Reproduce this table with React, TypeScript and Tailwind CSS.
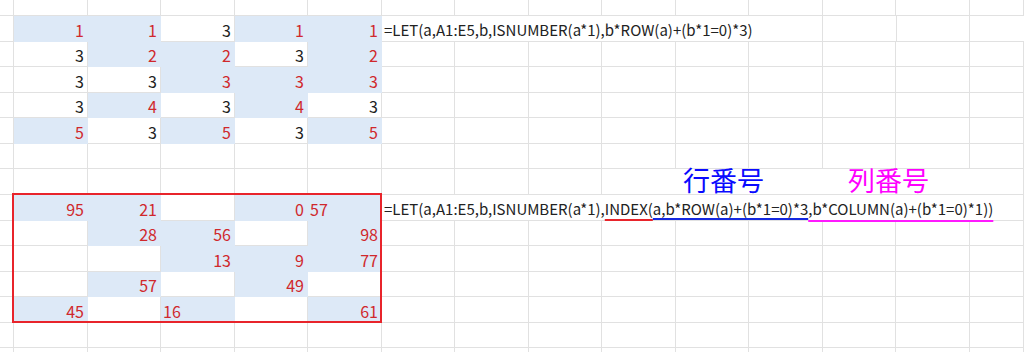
import React, { type ReactNode } from "react";

// column widths incl. right gridline; last column takes the rest
const colW: string[] = [
	"w-[14px]",
	"w-[74px]",
	"w-[73px]",
	"w-[74px]",
	"w-[73px]",
	"w-[74px]",
	"w-[73px]",
	"w-[74px]",
	"w-[73px]",
	"w-[74px]",
	"w-[73px]",
	"w-[74px]",
	"w-[73px]",
	"w-[74px]",
	"flex-1 min-w-0",
];

const rowH: string[] = [
	"h-[16px]",
	"h-[26px]",
	"h-[25px]",
	"h-[26px]",
	"h-[25px]",
	"h-[26px]",
	"h-[25px]",
	"h-[26px]",
	"h-[26px]",
	"h-[25px]",
	"h-[26px]",
	"h-[25px]",
	"h-[26px]",
	"h-[25px]",
	"h-[8px]",
];

// which cells of the 5x5 block are filled
const fill: boolean[][] = [
	[true, true, false, true, true],
	[false, true, true, false, true],
	[false, false, true, true, true],
	[false, true, false, true, false],
	[true, false, true, false, true],
];

const bottomVals: string[][] = [
	["95", "21", "", "0", "'57"],
	["", "28", "56", "", "98"],
	["", "", "13", "9", "77"],
	["", "57", "", "49", ""],
	["45", "", "'16", "", "61"],
];

type cell = {
	text?: string;
	red?: boolean;
	blue?: boolean;
	left?: boolean;
	top?: boolean;
	w?: string;
	node?: ReactNode;
};

const Cell: React.FC<{ c: cell; w: string }> = ({ c, w }): ReactNode => {
	const bg = c.blue ? "bg-[#dde9f7] border-[#dde9f7]" : "border-[#e1e1e1]";
	const color = c.red ? "text-[#d0282c]" : "text-[#222222]";
	const align = c.left ? "justify-start pl-[2px]" : "justify-end pr-[3px]";
	const layer = c.top ? "relative z-10" : "";
	return (
		<div
			className={`${w} ${bg} ${color} ${align} ${layer} shrink-0 h-full flex items-end border-r border-b pb-[1px] text-[16px] leading-[20px] whitespace-nowrap overflow-visible`}>
			{c.node ?? c.text}
		</div>
	);
};

const Row: React.FC<{ h: string; cells: cell[] }> = ({ h, cells }): ReactNode => {
	let col = 0;
	return (
		<div className={`${h} flex w-full`}>
			{cells.map((c, i) => {
				const w = c.w ?? colW[col];
				col++;
				return <Cell key={i} c={c} w={w} />;
			})}
		</div>
	);
};

const blanks = (n: number): cell[] => Array.from({ length: n }, () => ({}));

const Formula1 = (): ReactNode => (
	<span className="text-[15px]">=LET(a,A1:E5,b,ISNUMBER(a*1),b*ROW(a)+(b*1=0)*3)</span>
);

const Formula2 = (): ReactNode => (
	<span className="text-[15px]">
		=LET(a,A1:E5,b,ISNUMBER(a*1),
		<span className="underline decoration-[#e8242b] decoration-2 underline-offset-[4px] [text-decoration-skip-ink:none]">
			INDEX(
		</span>
		<span className="underline decoration-[#1428e0] decoration-2 underline-offset-[3px] [text-decoration-skip-ink:none]">
			a,b*ROW(a)+(b*1=0)*3
		</span>
		<span className="underline decoration-[#ff1aff] decoration-2 underline-offset-[5px] [text-decoration-skip-ink:none]">
			,b*COLUMN(a)+(b*1=0)*1))
		</span>
	</span>
);

const App: React.FC = (): ReactNode => {
	const rows: cell[][] = [];
	rows.push(blanks(15));

	// top block: row number where the source is a number, 3 elsewhere
	fill.forEach((r, ri) => {
		const block: cell[] = r.map((f) =>
			f ? { text: String(ri + 1), red: true, blue: true } : { text: "3" }
		);
		if (ri === 0) {
			rows.push([{}, ...block, { node: <Formula1 />, left: true, w: "w-[441px]" }, ...blanks(3)]);
		} else {
			rows.push([{}, ...block, ...blanks(9)]);
		}
	});

	rows.push(blanks(15));

	// labels over the formula
	rows.push([
		...blanks(9),
		{
			w: "flex-1 min-w-0",
			left: true,
			top: true,
			node: (
				<div className="flex items-end leading-none text-[27px] pl-[79px]">
					<span className="text-[#0a0aff]">行番号</span>
					<span className="text-[#ff00ff] ml-[84px]">列番号</span>
				</div>
			),
		},
	]);

	bottomVals.forEach((r, ri) => {
		const block: cell[] = r.map((v, ci) => {
			const isText = v.startsWith("'");
			return {
				text: isText ? v.slice(1) : v,
				red: true,
				blue: fill[ri][ci],
				left: isText,
			};
		});
		if (ri === 0) {
			rows.push([{}, ...block, { node: <Formula2 />, left: true, top: true, w: "flex-1 min-w-0" }]);
		} else {
			rows.push([{}, ...block, ...blanks(9)]);
		}
	});

	rows.push(blanks(15));
	rows.push(blanks(15));

	return (
		<div className="relative w-[1024px] h-[352px] overflow-hidden bg-white font-['Noto_Sans_CJK_JP','Noto_Sans',sans-serif]">
			{rows.map((cells, i) => (
				<Row key={i} h={rowH[i]} cells={cells} />
			))}
			{/* range border */}
			<div className="absolute left-[12px] top-[193px] w-[370px] h-[130px] border-2 border-[#e8242b] pointer-events-none" />
		</div>
	);
};

export default App;
